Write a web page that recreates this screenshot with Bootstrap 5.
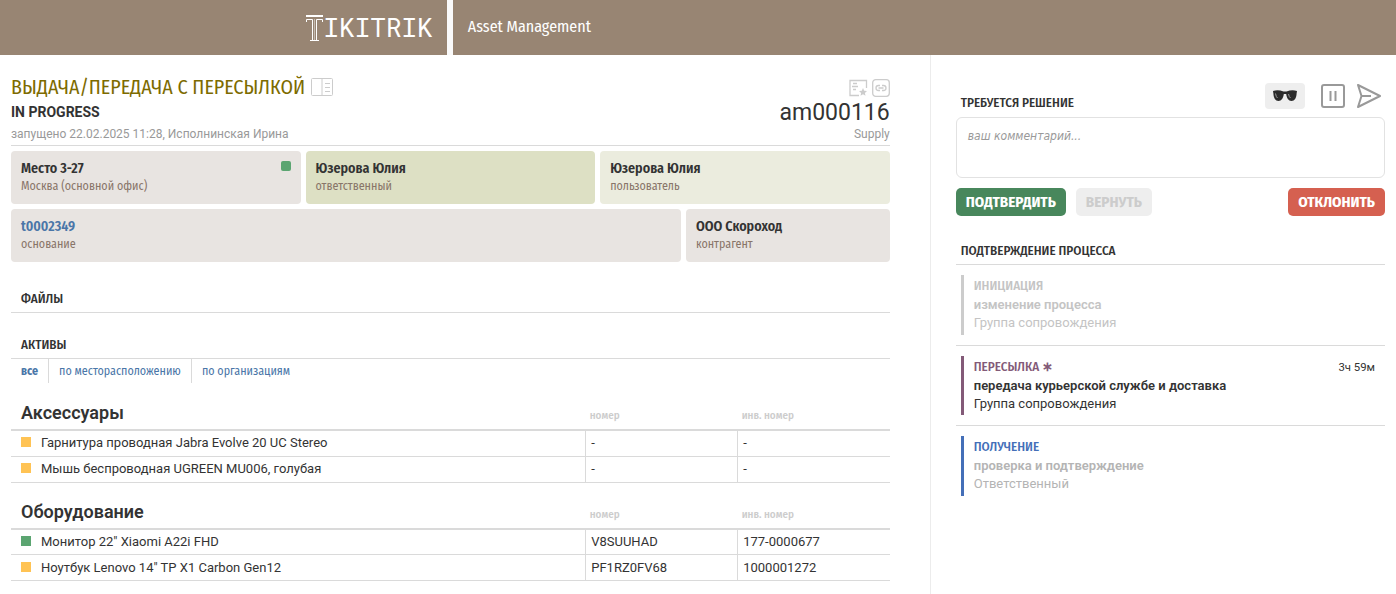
<!DOCTYPE html>
<html lang="ru">
<head>
<meta charset="utf-8">
<meta name="viewport" content="width=device-width, initial-scale=1">
<title>am000116 — Asset Management</title>
<link href="https://cdn.jsdelivr.net/npm/bootstrap@5.3.0/dist/css/bootstrap.min.css" rel="stylesheet">
<style>
:root{--narrow:"Fira Sans Condensed","Liberation Sans Narrow","Open Sans",sans-serif;--line:#dadada;--ink:#333;--blue:#4a76a8}
body{font-family:Roboto,sans-serif;font-size:13px;line-height:18px;color:var(--ink)}
a{color:var(--blue);text-decoration:none}
.topbar{background:#988573;height:55px;color:#fff;font-family:var(--narrow);font-size:16px}
.brand-side{width:32%;padding-right:14px}
.brand-side a{color:#fff}
.brand-word{font-family:"Roboto Mono","DejaVu Sans Mono",monospace;font-size:26px;line-height:26px;padding-bottom:2px}
.product{border-left:6px solid #fafafa;padding:0 0 2px 15px}
.main-col{flex:0 0 66.6%;padding:20px 40px 0 11px}
.side-col{padding:28px 11px 0 25px;border-left:1px solid #ececec;min-height:calc(100vh - 55px)}
.title-row{gap:6px}
.doc-title{font-family:var(--narrow);font-weight:400;font-size:20px;line-height:24px;color:#7d6b00;margin:0}
.status{font-size:14px;line-height:18px;font-weight:700}
.muted{color:#999;font-size:12px;line-height:18px}
.doc-id{font-size:23px;line-height:24px}
.doc-head{border-bottom:1px solid var(--line);padding-bottom:2px;margin-bottom:5px}
.icon-btn{border:0;background:none;padding:0;line-height:0;color:#ccc}
.tiles{gap:5px;margin-bottom:5px}
.tile{background:#e8e4e1;border-radius:4px;padding:9px 10px;flex:1 1 0;font-family:var(--narrow);min-width:0}
.tile strong{display:block;font-size:14px;font-weight:600;line-height:18px}
.tile span{display:block;font-size:12px;line-height:17px;color:#887569}
.tile.olive{background:#dde0c4}.tile.pale{background:#ebecde}
.tile.partner{flex:0 0 23.2%}
.sq{display:inline-block;width:10px;height:10px;margin-right:10px;background:#ffc354;flex:none}
.sq.green{background:#5ba571}
.sq.round{border-radius:2px;margin:1px 0 0}
.sect{font-family:var(--narrow);font-size:13px;font-weight:500;line-height:18px;margin:23px 0 0;padding:0 10px 4px;border-bottom:1px solid var(--line)}
.sect.first{margin-top:28px}
.tabs{margin-bottom:18px}
.tabs a{font-family:var(--narrow);font-size:12px;line-height:24px;padding:0 10px;border-left:1px solid var(--line)}
.tabs a:first-child{border-left:0;font-weight:700}
.assets{width:100%;table-layout:fixed;margin-bottom:17px}
.assets th{height:29px;padding:0 5px 4px 4px;font-family:var(--narrow);font-size:11px;font-weight:500;color:#ccc;vertical-align:bottom;border-bottom:2px solid var(--line)}
.assets th:first-child{padding-left:10px;font-family:Roboto,sans-serif;font-size:18px;font-weight:600;color:var(--ink);line-height:24px}
.assets td{height:26px;padding:0 5px;border-bottom:1px solid var(--line);border-left:1px solid var(--line)}
.assets td:first-child{border-left:0;padding-left:10px}
.wide{width:65.4%}
.tools{margin-bottom:3px}
.ask{margin-bottom:5px}
.ask-label{font-family:var(--narrow);font-weight:500;padding-left:5px}
.glasses{width:40px;height:26px;background:#eee;border:0;border-radius:4px;padding:0}
.note{height:61px;border:1px solid #e2e2e2;border-radius:6px;padding:9px 11px;font-size:12px;line-height:18px;resize:none}
.note::placeholder{color:#999;font-style:italic;font-family:"DejaVu Sans Condensed","DejaVu Sans",sans-serif;font-size:12px}
.acts{gap:10px;margin-top:10px}
.act{font-family:var(--narrow);font-size:15px;line-height:18px;font-weight:700;padding:5px 10px;border:0;border-radius:5px;color:#fff}
.act.ok{background:#48875c}.act.no{background:#d56050}
.act.off:disabled{background:#eee;color:#ccc;opacity:1}
.sect.steps{margin-top:26px;padding-left:5px}
.step{border-bottom:1px solid var(--line);padding:10px 10px 10px 5px}
.step:last-child{border-bottom:0}
.step-body{border-left:3px solid #ccc;padding:2px 0 3px 10px;color:#c4c4c4}
.step-name{font-family:var(--narrow);font-size:13px;font-weight:500;line-height:18px}
.step-body strong{display:block;line-height:19px;font-weight:600}
.now .step-body{border-color:#835a78;color:var(--ink);padding-bottom:2px}.now .step-name{color:#835a78}
.next .step-body{border-color:#446fb8;color:#b4b4b4}.next .step-name{color:#446fb8}
</style>
</head>
<body>
<header class="topbar d-flex">
  <div class="brand-side d-flex justify-content-end align-items-center">
    <a href="#" class="d-flex align-items-center" aria-label="Tikitrik">
      <svg width="19" height="28" viewBox="0 0 19 28" fill="none" stroke="#fff"><path d="M1 2H18" stroke-width="2"/><path d="M1.500 8V5.500H7.500V26M17.500 8V5.500H11.500V26M5 26.500H14"/><path d="M9.500 5V26" stroke-width="1" opacity=".45"/></svg>
      <span class="brand-word">IKITRIK</span>
    </a>
  </div>
  <div class="product d-flex align-items-center flex-grow-1">Asset Management</div>
</header>
<div class="container-fluid p-0">
<div class="row g-0">
<main class="main-col">
  <div class="doc-head d-flex justify-content-between">
    <div>
      <div class="title-row d-flex align-items-center">
        <h1 class="doc-title">ВЫДАЧА/ПЕРЕДАЧА С ПЕРЕСЫЛКОЙ</h1>
        <button class="icon-btn" aria-label="Описание"><svg width="22" height="18" viewBox="0 0 22 18" fill="none" stroke="currentColor"><rect x=".5" y=".5" width="21" height="17" rx="1"/><path d="M11 1V17M14 5.500H19M14 9.500H19M14 13.500H19"/></svg></button>
      </div>
      <div class="status mt-1">IN PROGRESS</div>
      <div class="muted mt-1">запущено 22.02.2025 11:28, Исполнинская Ирина</div>
    </div>
    <div class="text-end">
      <div class="d-flex justify-content-end gap-1 pt-1 mb-1">
        <button class="icon-btn" aria-label="В избранное"><svg width="20" height="18" viewBox="0 0 20 18" fill="none" stroke="currentColor"><path d="M11 16.500H2V1.500H18.500V9M5 4.500H9M4 7.500H10M5 10.500H8" stroke-width="1.300"/><path fill="currentColor" stroke="none" d="M15 9l1.200 2.700 2.800.3-2.100 1.900.6 2.900-2.500-1.500-2.500 1.500.6-2.900-2.100-1.900 2.800-.3z"/></svg></button>
        <button class="icon-btn" aria-label="Ссылка"><svg width="18" height="18" viewBox="0 0 18 18" fill="none" stroke="currentColor" stroke-width="1.300"><rect x=".7" y=".7" width="16.600" height="16.600" rx="3"/><path d="M8 6.500H6.500a2.500 2.500 0 0 0 0 5H8M10 6.500h1.500a2.500 2.500 0 0 1 0 5H10M6.500 9h5"/></svg></button>
      </div>
      <div class="doc-id">am000116</div>
      <div class="muted">Supply</div>
    </div>
  </div>
  <div class="tiles d-flex">
    <div class="tile d-flex justify-content-between"><div><strong>Место 3-27</strong><span>Москва (основной офис)</span></div><i class="sq green round"></i></div>
    <div class="tile olive"><strong>Юзерова Юлия</strong><span>ответственный</span></div>
    <div class="tile pale"><strong>Юзерова Юлия</strong><span>пользователь</span></div>
  </div>
  <div class="tiles d-flex">
    <div class="tile"><strong><a href="#">t0002349</a></strong><span>основание</span></div>
    <div class="tile partner"><strong>ООО Скороход</strong><span>контрагент</span></div>
  </div>
  <h2 class="sect first">ФАЙЛЫ</h2>
  <h2 class="sect">АКТИВЫ</h2>
  <nav class="tabs d-flex"><a href="#">все</a><a href="#">по месторасположению</a><a href="#">по организациям</a></nav>
  <table class="assets">
    <thead><tr><th class="wide">Аксессуары</th><th>номер</th><th>инв. номер</th></tr></thead>
    <tbody>
      <tr><td><i class="sq"></i>Гарнитура проводная Jabra Evolve 20 UC Stereo</td><td>-</td><td>-</td></tr>
      <tr><td><i class="sq"></i>Мышь беспроводная UGREEN MU006, голубая</td><td>-</td><td>-</td></tr>
    </tbody>
  </table>
  <table class="assets mb-2">
    <thead><tr><th class="wide">Оборудование</th><th>номер</th><th>инв. номер</th></tr></thead>
    <tbody>
      <tr><td><i class="sq green"></i>Монитор 22" Xiaomi A22i FHD</td><td>V8SUUHAD</td><td>177-0000677</td></tr>
      <tr><td><i class="sq"></i>Ноутбук Lenovo 14" TP X1 Carbon Gen12</td><td>PF1RZ0FV68</td><td>1000001272</td></tr>
    </tbody>
  </table>
</main>
<aside class="col side-col">
  <div class="ask d-flex justify-content-between align-items-end">
    <label for="note" class="ask-label">ТРЕБУЕТСЯ РЕШЕНИЕ</label>
    <div class="tools d-flex align-items-center gap-2">
      <button class="glasses d-flex align-items-center justify-content-center me-1" aria-label="Просмотр"><svg width="24" height="12" viewBox="0 0 24 12"><path fill="#2b2b2b" d="M0 1Q5-.5 10.500 1.500h3Q19-.5 24 1l-.4 2.500C23.500 8 21.500 11 18.500 11S13.700 8 13.200 4h-2.400C10.300 8 8.500 11 5.500 11S.5 8 .4 3.500z"/><path d="M2.500 3.500Q3 7 4.500 8M15.500 4Q16 7 17.500 8" stroke="#999" fill="none"/></svg></button>
      <button class="icon-btn ms-1" aria-label="Пауза"><svg width="24" height="24" viewBox="0 0 24 24" fill="none" stroke="#999" stroke-width="2"><rect x="1" y="1" width="22" height="22" rx="2"/><path d="M9.500 7V17M14.500 7V17"/></svg></button>
      <button class="icon-btn me-1 ms-1" aria-label="Отправить"><svg width="24" height="24" viewBox="0 0 24 24" fill="none" stroke="#999" stroke-width="2" stroke-linejoin="round"><path d="M1 1L23 12 1 23 4.500 12zM4.500 12H14"/></svg></button>
    </div>
  </div>
  <textarea id="note" class="note form-control" placeholder="ваш комментарий..."></textarea>
  <div class="acts d-flex">
    <button class="act ok">ПОДТВЕРДИТЬ</button>
    <button class="act off" disabled>ВЕРНУТЬ</button>
    <button class="act no ms-auto">ОТКЛОНИТЬ</button>
  </div>
  <h2 class="sect steps">ПОДТВЕРЖДЕНИЕ ПРОЦЕССА</h2>
  <div class="step"><div class="step-body"><div class="step-name">ИНИЦИАЦИЯ</div><strong>изменение процесса</strong>Группа сопровождения</div></div>
  <div class="step now"><div class="step-body"><div class="d-flex justify-content-between"><span class="step-name">ПЕРЕСЫЛКА <b>∗</b></span><small>3ч 59м</small></div><strong>передача курьерской службе и доставка</strong>Группа сопровождения</div></div>
  <div class="step next"><div class="step-body"><div class="step-name">ПОЛУЧЕНИЕ</div><strong>проверка и подтверждение</strong>Ответственный</div></div>
</aside>
</div>
</div>
<script src="https://cdn.jsdelivr.net/npm/bootstrap@5.3.0/dist/js/bootstrap.bundle.min.js"></script>
</body>
</html>
